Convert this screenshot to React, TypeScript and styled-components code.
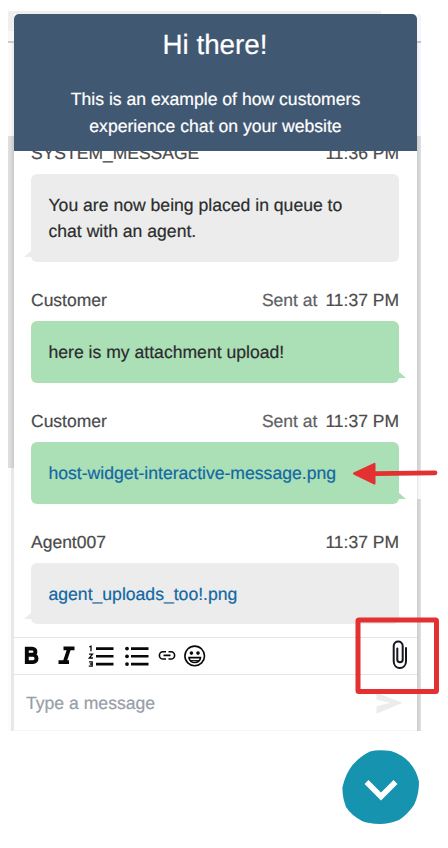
import React from 'react';
import styled, { createGlobalStyle } from 'styled-components';

const GlobalStyle = createGlobalStyle`
  * { box-sizing: border-box; }
  body { margin: 0; background: #fff; font-family: "Liberation Sans", Arial, sans-serif; -webkit-text-stroke: 0.2px; text-rendering: geometricPrecision; }
`;

const Page = styled.main`
  position: relative;
  width: 448px;
  height: 848px;
  padding: 11px 0 0 8px;
  overflow: hidden;
`;
const TopEdge = styled.div`
  width: 373px;
  height: 3px;
  background: #efefef;
`;
const Stage = styled.div`
  display: grid;
  grid-template-columns: 6px 403px 4px;
  height: 717px;
`;
const Edge = styled.div`
  display: flex;
  flex-direction: column;
`;
const Strip = styled.div<{ $h: number; $bg: string }>`
  flex: 0 0 ${p => p.$h}px;
  background: ${p => p.$bg};
`;
const Widget = styled.section`
  display: flex;
  flex-direction: column;
  min-width: 0;
`;
const Header = styled.header`
  flex: 0 0 137px;
  padding-top: 15px;
  border-radius: 5px 5px 0 0;
  background: #415873;
  color: #fff;
  text-align: center;
`;
const Title = styled.h1`
  margin: 0 0 25px;
  font-size: 27.8px;
  line-height: 32px;
  font-weight: 400;
  padding-right: 1px;
`;
const Subtitle = styled.p`
  margin: 0;
  font-size: 17.6px;
  line-height: 27px;
`;
const Messages = styled.div`
  flex: 0 0 486px;
  overflow: hidden;
  padding: 0 18px 0 17px;
  background: #fff;
`;
const Message = styled.article`
  margin-bottom: 28px;
  &:first-child { margin-top: -8px; }
`;
const Meta = styled.div`
  display: flex;
  justify-content: space-between;
  height: 20px;
  margin-bottom: 11px;
  font-size: 17.5px;
  line-height: 20px;
  color: #4a4b4c;
`;
const Sent = styled.span`
  margin-right: 8px;
  color: #606162;
`;
const Bubble = styled.div<{ $own?: boolean; $h: number }>`
  position: relative;
  height: ${p => p.$h}px;
  padding: 18px 17.5px;
  border-radius: 6px;
  background: ${p => (p.$own ? '#abdfb5' : '#ececec')};
  color: #2b2c2d;
  font-size: 17.6px;
  line-height: 26px;
  white-space: nowrap;
  &::after {
    content: '';
    position: absolute;
    bottom: 5px;
    ${p => (p.$own ? 'right: -7px' : 'left: -7px')};
    width: 8px;
    height: 7px;
    background: inherit;
    clip-path: ${p => (p.$own ? 'polygon(0 0, 100% 100%, 0 100%)' : 'polygon(100% 0, 100% 100%, 0 100%)')};
  }
`;
const FileLink = styled.a`
  color: #1268a3;
`;
const Toolbar = styled.div`
  flex: 0 0 38px;
  display: flex;
  align-items: center;
  padding-left: 8px;
  border: solid #e4e6e6;
  border-width: 1px 0;
  background: #fff;
  svg { display: block; }
`;
const ClipSlot = styled.div`
  margin-left: auto;
  margin-right: 8px;
`;
const Composer = styled.div`
  flex: 0 0 56px;
  display: flex;
  justify-content: space-between;
  padding: 17px 15px 0 12px;
  border-bottom: 1px solid #f5f5f5;
  background: #fff;
  color: #989ea8;
  font-size: 17.6px;
  line-height: 22px;
`;
const Launcher = styled.button`
  display: block;
  margin: 18px 0 0 334px;
  padding: 0;
  border: 0;
  background: none;
  svg { display: block; }
`;
const Annotations = styled.svg`
  position: absolute;
  inset: 0;
  pointer-events: none;
`;

const leftEdge: [number, string][] = [
  [17, '#efefef'], [10, '#f8f8f8'], [2, '#cbcacc'], [93, 'linear-gradient(90deg,#fbfbfb 40%,#e9e9e9)'],
  [332, 'linear-gradient(90deg,#dfdfdf,#dcdcdc 40%,#c8c8c8)'], [263, 'linear-gradient(90deg,#fcfcfc 45%,#e8e8e8 50%)'],
];
const rightEdge: [number, string][] = [
  [27, '#f6f5f8'], [2, '#c5c4c8'], [93, 'linear-gradient(90deg,#e9e9ee,#f7f6fa 60%)'],
  [339, 'linear-gradient(90deg,#cacdcc,#dfe1e0)'], [24, 'linear-gradient(90deg,#e3e3e3,#f8f8f8 50%)'],
  [232, 'linear-gradient(90deg,#cacdcc,#dfe1e0)'],
];

const messages = [
  { from: 'SYSTEM_MESSAGE', time: '11:36 PM', h: 88, body: <>You are now being placed in queue to<br />chat with an agent.</> },
  { from: 'Customer', time: '11:37 PM', h: 62, own: true, body: 'here is my attachment upload!' },
  { from: 'Customer', time: '11:37 PM', h: 62, own: true, body: <FileLink>host-widget-interactive-message.png</FileLink> },
  { from: 'Agent007', time: '11:37 PM', h: 61, body: <FileLink>agent_uploads_too!.png</FileLink> },
];

const FormatIcons = () => (
  <svg width="188" height="30" viewBox="22 641.4 188 30" fill="none" stroke="#080808">
    <path d="M26.800 649h5.400c4.300 0 4.300 6.200 0 6.200h-5.400zm0 6.200h6.200c4.700 0 4.700 7.300 0 7.300h-6.200z" strokeWidth="3.9" />
    <path d="M63.500 648.800h11M58.500 662.600h10.500M69.300 648.600l-4.600 13.700" strokeWidth="3.7" />
    <path d="M96 649h17.5M96 656.7h17.5M96 664.5h17.5M131 649h17.5M131 656.7h17.5M131 664.5h17.5" strokeWidth="2.6" />
    <path d="M89.3 647.3l1.7-.7v5M89 654.6h3.5l-3.2 3.8h3.7M89 662.3h3.2v4.2h-3.4M89.8 664.4h2.2" strokeWidth="1.3" />
    <g fill="#080808" stroke="none"><circle cx="127" cy="649" r="1.9" /><circle cx="127" cy="656.7" r="1.9" /><circle cx="127" cy="664.5" r="1.9" /></g>
    <path d="M166 652.200h-3a3.6 3.6 0 0 0 0 7.200h3M168.5 652.200h2.5a3.6 3.6 0 0 1 0 7.200h-2.5M163.5 655.8h7" strokeWidth="1.6" />
    <circle cx="194.7" cy="656.3" r="9.8" strokeWidth="1.6" />
    <path d="M189 658h11.5c-.4 6.5-11 6.5-11.5 0z" strokeWidth="1.6" />
    <path d="M190.5 661h8.5" strokeWidth="1" />
    <g fill="#080808" stroke="none"><circle cx="191.4" cy="653.5" r="1.8" /><circle cx="198" cy="653.5" r="1.8" /></g>
  </svg>
);

const Paperclip = () => (
  <svg width="18" height="32" viewBox="391 640 18 32" fill="none" stroke="#15171c" strokeWidth="2" strokeLinecap="round">
    <path d="M406 648v13.2c0 9-12.3 9-12.3 0V646c0-6 9-6 9 0v13.8c0 3.3-5.4 3.3-5.4 0V648.5" />
  </svg>
);

export default function App() {
  return (
    <Page>
      <GlobalStyle />
      <TopEdge />
      <Stage>
        <Edge>{leftEdge.map(([h, bg], i) => <Strip key={i} $h={h} $bg={bg} />)}</Edge>
        <Widget>
          <Header>
            <Title>Hi there!</Title>
            <Subtitle>This is an example of how customers<br />experience chat on your website</Subtitle>
          </Header>
          <Messages>
            {messages.map((m, i) => (
              <Message key={i}>
                <Meta>
                  <span>{m.from}</span>
                  <span>{m.own && <Sent>Sent at</Sent>}{m.time}</span>
                </Meta>
                <Bubble $own={m.own} $h={m.h}>{m.body}</Bubble>
              </Message>
            ))}
          </Messages>
          <Toolbar>
            <FormatIcons />
            <ClipSlot><Paperclip /></ClipSlot>
          </Toolbar>
          <Composer>
            <span>Type a message</span>
            <svg width="27" height="22" viewBox="375 692 27 22" fill="#ececec">
              <path d="M376.5 693l26 9.8-26 11v-7.6l14-3.4-14-3z" />
            </svg>
          </Composer>
        </Widget>
        <Edge>{rightEdge.map(([h, bg], i) => <Strip key={i} $h={h} $bg={bg} />)}</Edge>
      </Stage>
      <Launcher aria-label="Minimize chat">
        <svg width="78" height="76" viewBox="342 749 78 76">
          <path d="M370 751.5q8-2 21-.5 11 3.5 18 11 8 9 10 20 0 13-5 23-7 10-15 15-10 4-19 4-12-.5-18-3-11-6-16-14-4-11-3.5-20 3-13 10-22 8-9 17.500-13.500z" fill="#1593af" />
          <path d="M366.500 782l14.500 14.500 14.500-14.500" fill="none" stroke="#fff" strokeWidth="5.500" />
        </svg>
      </Launcher>
      <Annotations width="448" height="848" viewBox="0 0 448 848">
        <rect x="358" y="620" width="78.500" height="71.500" rx="1" fill="none" stroke="#e33131" strokeWidth="5" />
        <path d="M374 473.700L435 472.800" stroke="#e33131" strokeWidth="4.800" strokeLinecap="round" />
        <path d="M354 473.500L374.500 463.800V483.500z" fill="#e33131" stroke="#e33131" strokeWidth="2" strokeLinejoin="round" />
      </Annotations>
    </Page>
  );
}
